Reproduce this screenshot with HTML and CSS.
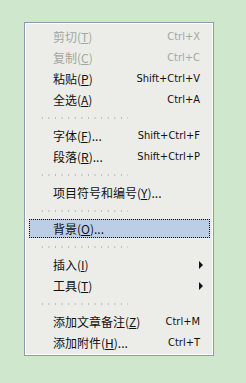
FILE: index.html
```html
<!DOCTYPE html>
<html>
<head>
<meta charset="utf-8">
<link rel="stylesheet" href="styles.css">
</head>
<body>
<div class="menu">
    <div class="item off"><span class="label">剪切(<u>T</u>)</span><span class="key">Ctrl+X</span></div>
    <div class="item off"><span class="label">复制(<u>C</u>)</span><span class="key">Ctrl+C</span></div>
    <div class="item"><span class="label">粘贴(<u>P</u>)</span><span class="key">Shift+Ctrl+V</span></div>
    <div class="item"><span class="label">全选(<u>A</u>)</span><span class="key">Ctrl+A</span></div>
    <div class="sep"></div>
    <div class="item"><span class="label">字体(<u>F</u>)...</span><span class="key">Shift+Ctrl+F</span></div>
    <div class="item"><span class="label">段落(<u>R</u>)...</span><span class="key">Shift+Ctrl+P</span></div>
    <div class="sep"></div>
    <div class="item"><span class="label">项目符号和编号(<u>Y</u>)...</span></div>
    <div class="sep"></div>
    <div class="item hover"><span class="label">背景(<u>O</u>)...</span></div>
    <div class="sep"></div>
    <div class="item"><span class="label">插入(<u>I</u>)</span><span class="arrow"></span></div>
    <div class="item"><span class="label">工具(<u>T</u>)</span><span class="arrow"></span></div>
    <div class="sep"></div>
    <div class="item"><span class="label">添加文章备注(<u>Z</u>)</span><span class="key">Ctrl+M</span></div>
    <div class="item"><span class="label">添加附件(<u>H</u>)...</span><span class="key">Ctrl+T</span></div>
</div>
</body>
</html>
```
FILE: styles.css
```css
html, body {
    margin: 0;
    background-color: #cfe8cd;
}
body {
    padding: 22px 0 0 24px;
    font-family: "DejaVu Sans Condensed", "Noto Sans CJK SC", sans-serif;
    font-size: 11px;
    color: #111;
}
.menu {
    width: 190px;
    box-sizing: border-box;
    background-color: #ecede9;
    border: 1px solid #8c9cae;
    box-shadow: inset 1px 1px 0 #ffffff, inset -1px -1px 0 #ffffff;
    padding: 3px 3px 2px 4px;
}
.item {
    display: flex;
    align-items: center;
    height: 21px;
    box-sizing: border-box;
    padding: 0 8px 0 23px;
    border: 1px solid transparent;
}
.item.hover {
    height: 19px;
    margin: 1px 0;
    background-color: #bccde6;
    border: 1px dotted #111;
}
.label {
    flex: 1;
    font-family: "Noto Sans CJK SC", sans-serif;
    font-size: 12px;
    white-space: nowrap;
}
.label u {
    text-decoration-thickness: 1px;
    text-underline-offset: 1px;
}
.key {
    white-space: nowrap;
    margin-right: 1px;
}
.off {
    color: #a4a6a2;
}
.arrow {
    width: 0;
    height: 0;
    border-left: 4px solid #111;
    border-top: 4px solid transparent;
    border-bottom: 4px solid transparent;
    margin-right: -2px;
}
.sep {
    height: 15px;
    margin: 0 82px 0 10px;
    background-image: radial-gradient(circle, #b8bab6 0.7px, transparent 0.9px);
    background-size: 6.6px 2px;
    background-repeat: repeat-x;
    background-position: 0 7px;
}
```
